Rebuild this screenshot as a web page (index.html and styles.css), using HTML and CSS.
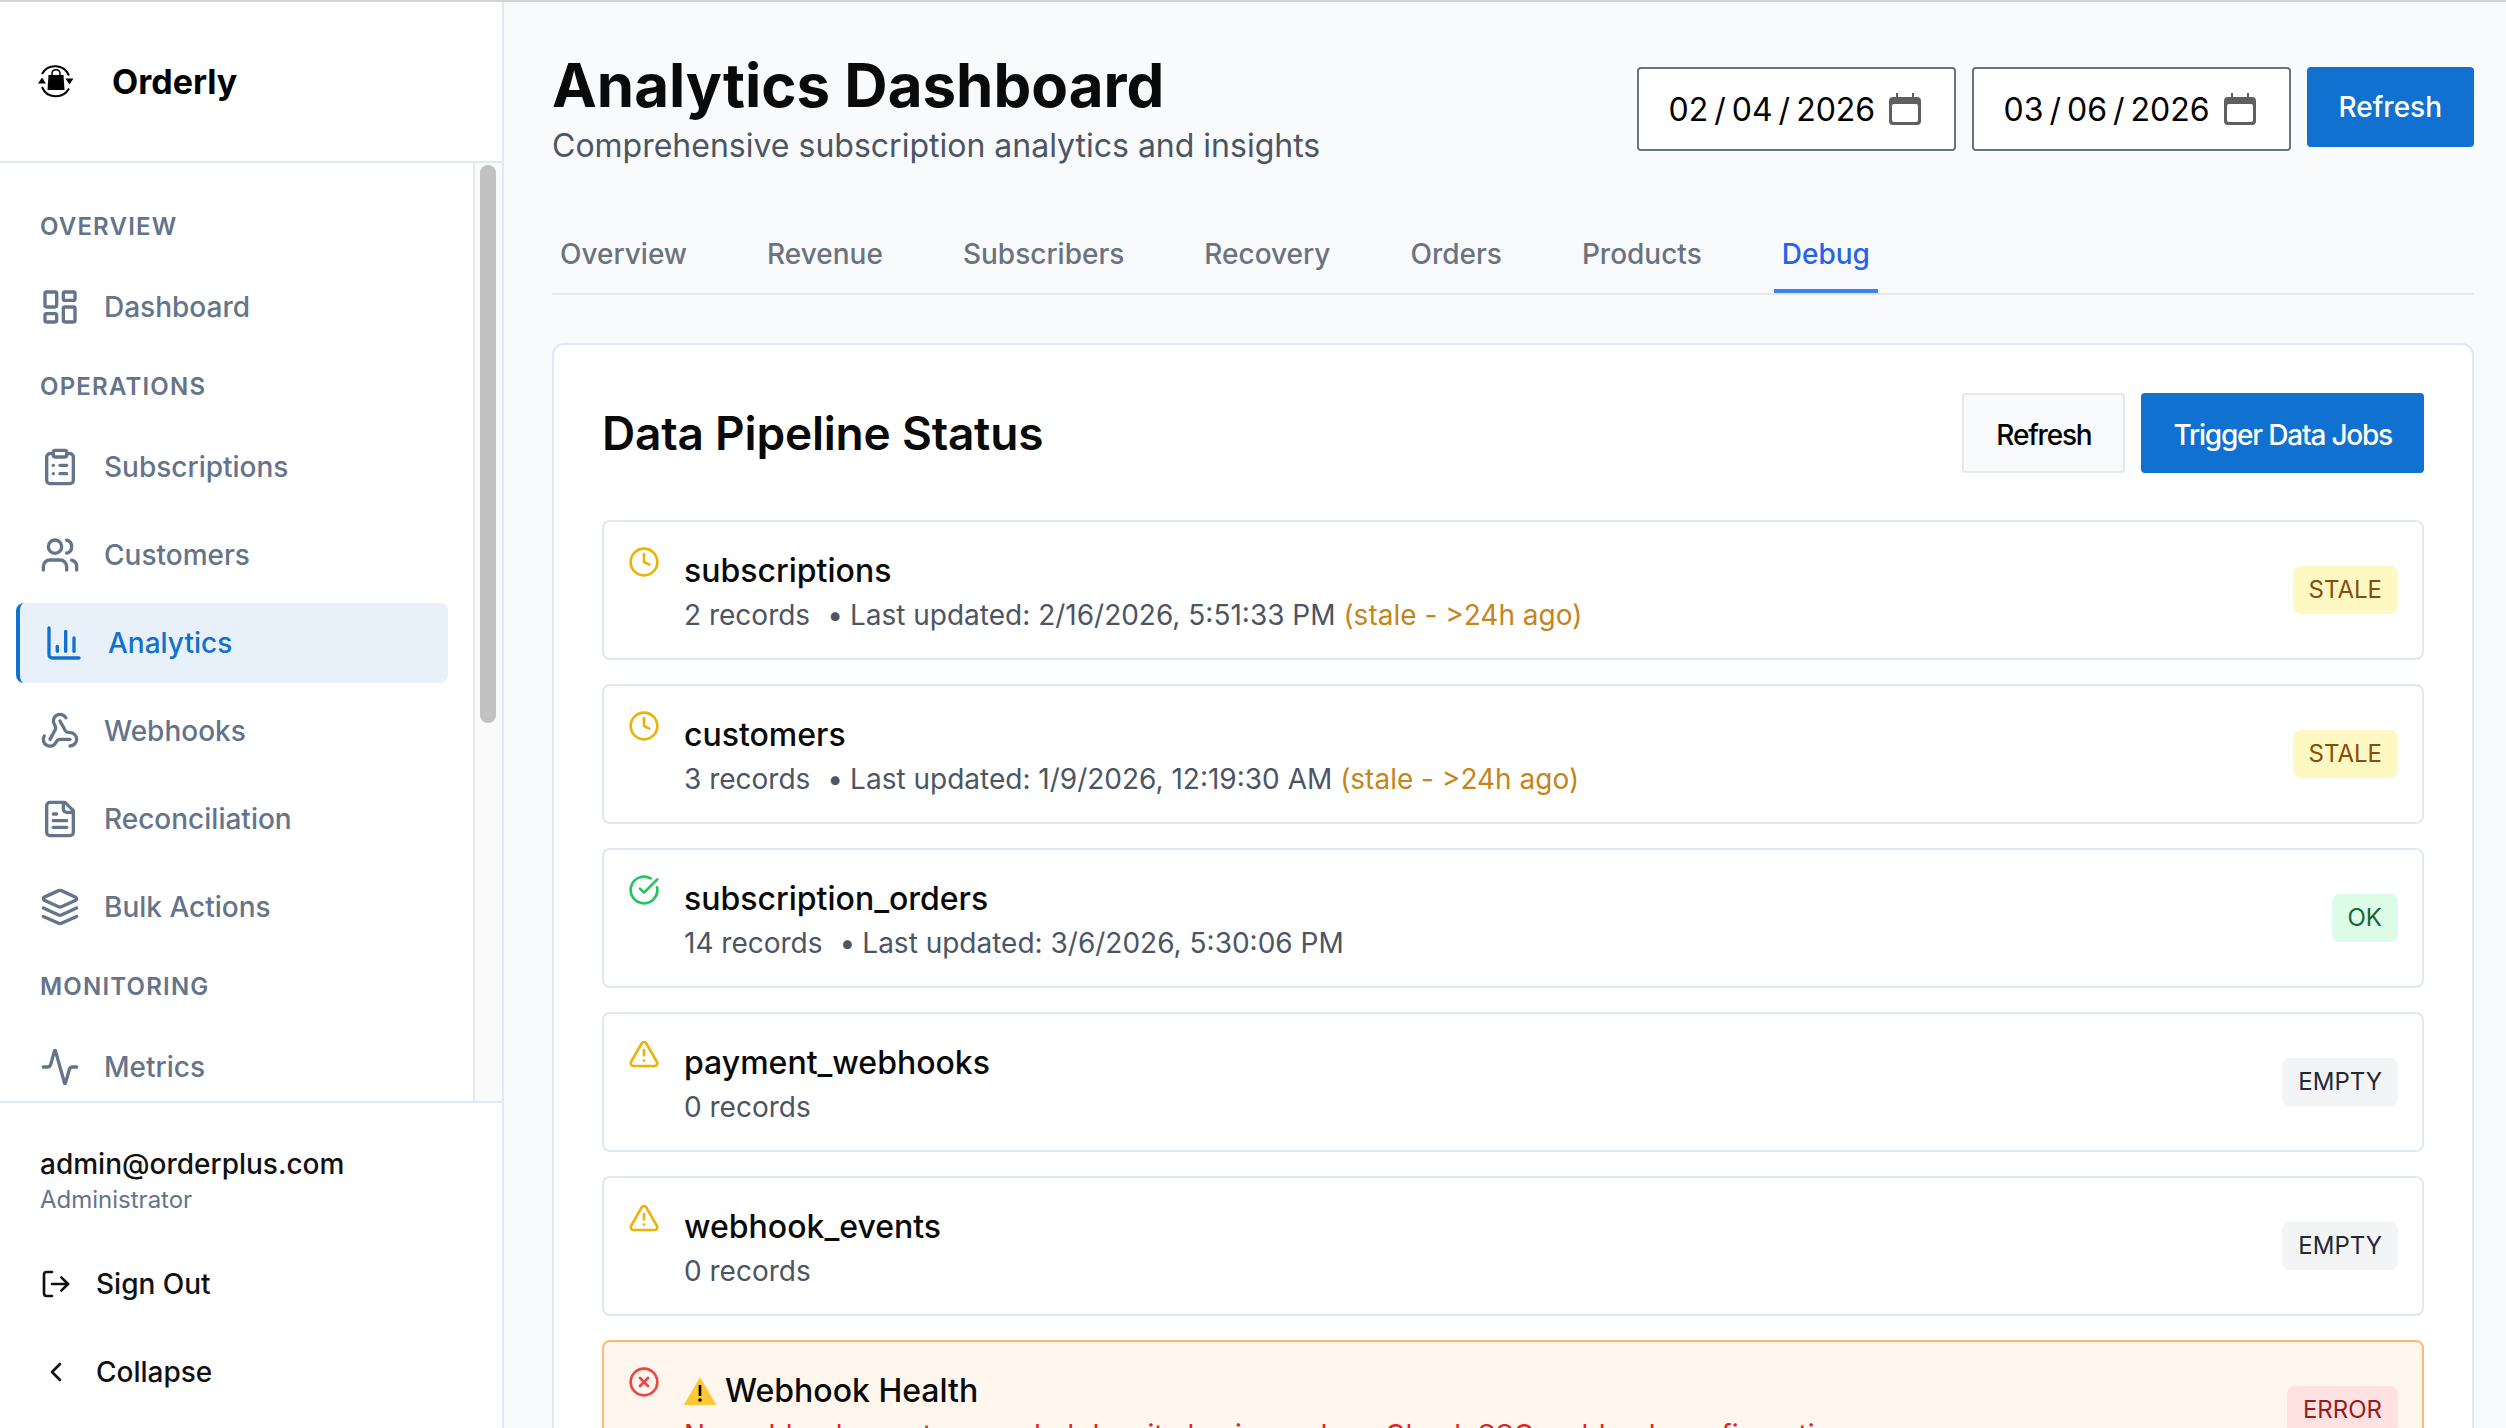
FILE: index.html
```html
<!DOCTYPE html>
<html>
	<head>
		<meta charset="UTF-8">
		<title>Analytics Dashboard</title>
		<link rel="stylesheet" href="styles.css">
	</head>
	<body>
	<div class="sidebar">
		<div class="brand">
			<svg class="logo" viewBox="0 0 40 36" fill="none" stroke="#000">
				<path d="M6 10A15 15 0 0 1 33 11.500" stroke-width="2"/>
				<path d="M29.500 14.500h8l-4 6z" fill="#000" stroke="none"/>
				<path d="M33 24.500A15 15 0 0 1 6 23" stroke-width="2"/>
				<path d="M2 19.500h8l-4-6z" fill="#000" stroke="none"/>
				<path d="M12.500 11h15l1 15h-17z" fill="#000" stroke="none"/>
				<path d="M16 12V9.500c0-5 8-5 8 0V12" stroke-width="1.500"/>
			</svg>
			<span class="brand_name">Orderly</span>
		</div>
		<div class="nav">
			<div class="nav_label">OVERVIEW</div>
			<a class="nav_item" href="#">
				<svg viewBox="0 0 24 24"><rect x="3" y="3" width="7" height="9" rx="1"/><rect x="14" y="3" width="7" height="5" rx="1"/><rect x="14" y="12" width="7" height="9" rx="1"/><rect x="3" y="16" width="7" height="5" rx="1"/></svg>
				Dashboard
			</a>
			<div class="nav_label">OPERATIONS</div>
			<a class="nav_item" href="#">
				<svg viewBox="0 0 24 24"><rect x="8" y="2" width="8" height="4" rx="1"/><path d="M16 4h2a2 2 0 0 1 2 2v14a2 2 0 0 1-2 2H6a2 2 0 0 1-2-2V6a2 2 0 0 1 2-2h2"/><path d="M12 11h4"/><path d="M12 16h4"/><path d="M8 11h.01"/><path d="M8 16h.01"/></svg>
				Subscriptions
			</a>
			<a class="nav_item" href="#">
				<svg viewBox="0 0 24 24"><path d="M16 21v-2a4 4 0 0 0-4-4H6a4 4 0 0 0-4 4v2"/><circle cx="9" cy="7" r="4"/><path d="M22 21v-2a4 4 0 0 0-3-3.870"/><path d="M16 3.130a4 4 0 0 1 0 7.750"/></svg>
				Customers
			</a>
			<a class="nav_item active" href="#">
				<svg viewBox="0 0 24 24"><path d="M3 3v16a2 2 0 0 0 2 2h16"/><path d="M18 17V9"/><path d="M13 17V5"/><path d="M8 17v-3"/></svg>
				Analytics
			</a>
			<a class="nav_item" href="#">
				<svg viewBox="0 0 24 24"><path d="M18 16.980h-5.990c-1.100 0-1.950.940-2.480 1.900A4 4 0 0 1 2 17c.010-.700.200-1.400.570-2"/><path d="m6 17 3.130-5.780c.530-.970.100-2.180-.500-3.100a4 4 0 1 1 6.890-4.060"/><path d="m12 6 3.130 5.730C15.660 12.700 16.900 13 18 13a4 4 0 0 1 0 8"/></svg>
				Webhooks
			</a>
			<a class="nav_item" href="#">
				<svg viewBox="0 0 24 24"><path d="M15 2H6a2 2 0 0 0-2 2v16a2 2 0 0 0 2 2h12a2 2 0 0 0 2-2V7Z"/><path d="M14 2v4a2 2 0 0 0 2 2h4"/><path d="M10 9H8"/><path d="M16 13H8"/><path d="M16 17H8"/></svg>
				Reconciliation
			</a>
			<a class="nav_item" href="#">
				<svg viewBox="0 0 24 24"><path d="M12.830 2.180a2 2 0 0 0-1.660 0L2.600 6.080a1 1 0 0 0 0 1.830l8.580 3.910a2 2 0 0 0 1.660 0l8.580-3.900a1 1 0 0 0 0-1.830Z"/><path d="m22 17.650-9.170 4.160a2 2 0 0 1-1.660 0L2 17.650"/><path d="m22 12.650-9.170 4.160a2 2 0 0 1-1.660 0L2 12.650"/></svg>
				Bulk Actions
			</a>
			<div class="nav_label">MONITORING</div>
			<a class="nav_item" href="#">
				<svg viewBox="0 0 24 24"><path d="M22 12h-2.480a2 2 0 0 0-1.930 1.460l-2.350 8.360a.250.250 0 0 1-.480 0L9.240 2.180a.250.250 0 0 0-.480 0l-2.350 8.360A2 2 0 0 1 4.490 12H2"/></svg>
				Metrics
			</a>
			<div class="nav_track"><div class="nav_thumb"></div></div>
		</div>
		<div class="side_foot">
			<div class="user">
				<div class="user_mail">admin@orderplus.com</div>
				<div class="user_role">Administrator</div>
			</div>
			<a class="foot_item" href="#">
				<svg viewBox="0 0 24 24"><path d="M9 21H5a2 2 0 0 1-2-2V5a2 2 0 0 1 2-2h4"/><polyline points="16 17 21 12 16 7"/><line x1="21" y1="12" x2="9" y2="12"/></svg>
				Sign Out
			</a>
			<a class="foot_item" href="#">
				<svg viewBox="0 0 24 24"><path d="m15 18-6-6 6-6"/></svg>
				Collapse
			</a>
		</div>
	</div>
	<div class="main">
		<div class="top">
			<div>
				<h1>Analytics Dashboard</h1>
				<p class="subtitle">Comprehensive subscription analytics and insights</p>
			</div>
			<div class="top_tools">
				<input class="date" type="date" value="2026-02-04">
				<input class="date" type="date" value="2026-03-06">
				<button class="btn primary">Refresh</button>
			</div>
		</div>
		<div class="tabs">
			<a href="#">Overview</a>
			<a href="#">Revenue</a>
			<a href="#">Subscribers</a>
			<a href="#">Recovery</a>
			<a href="#">Orders</a>
			<a href="#">Products</a>
			<a class="current" href="#">Debug</a>
		</div>
		<div class="card">
			<div class="card_head">
				<h2>Data Pipeline Status</h2>
				<div class="card_tools">
					<button class="btn plain">Refresh</button>
					<button class="btn primary">Trigger Data Jobs</button>
				</div>
			</div>
			<div class="rows">
				<div class="row">
					<svg class="status amber" viewBox="0 0 24 24"><circle cx="12" cy="12" r="10"/><polyline points="12 6 12 12 16 14"/></svg>
					<div class="row_text">
						<div class="row_name">subscriptions</div>
						<div class="row_info"><span>2 records</span><span class="dot">•</span><span>Last updated: 2/16/2026, 5:51:33 PM</span> <span class="stale">(stale - &gt;24h ago)</span></div>
					</div>
					<span class="badge b_stale">STALE</span>
				</div>
				<div class="row">
					<svg class="status amber" viewBox="0 0 24 24"><circle cx="12" cy="12" r="10"/><polyline points="12 6 12 12 16 14"/></svg>
					<div class="row_text">
						<div class="row_name">customers</div>
						<div class="row_info"><span>3 records</span><span class="dot">•</span><span>Last updated: 1/9/2026, 12:19:30 AM</span> <span class="stale">(stale - &gt;24h ago)</span></div>
					</div>
					<span class="badge b_stale">STALE</span>
				</div>
				<div class="row">
					<svg class="status green" viewBox="0 0 24 24"><path d="M21.801 10A10 10 0 1 1 17 3.335"/><path d="m9 11 3 3L22 4"/></svg>
					<div class="row_text">
						<div class="row_name">subscription_orders</div>
						<div class="row_info"><span>14 records</span><span class="dot">•</span><span>Last updated: 3/6/2026, 5:30:06 PM</span></div>
					</div>
					<span class="badge b_ok">OK</span>
				</div>
				<div class="row">
					<svg class="status amber" viewBox="0 0 24 24"><path d="m21.730 18-8-14a2 2 0 0 0-3.480 0l-8 14A2 2 0 0 0 4 21h16a2 2 0 0 0 1.730-3"/><path d="M12 9v4"/><path d="M12 17h.01"/></svg>
					<div class="row_text">
						<div class="row_name">payment_webhooks</div>
						<div class="row_info"><span>0 records</span></div>
					</div>
					<span class="badge b_empty">EMPTY</span>
				</div>
				<div class="row">
					<svg class="status amber" viewBox="0 0 24 24"><path d="m21.730 18-8-14a2 2 0 0 0-3.480 0l-8 14A2 2 0 0 0 4 21h16a2 2 0 0 0 1.730-3"/><path d="M12 9v4"/><path d="M12 17h.01"/></svg>
					<div class="row_text">
						<div class="row_name">webhook_events</div>
						<div class="row_info"><span>0 records</span></div>
					</div>
					<span class="badge b_empty">EMPTY</span>
				</div>
				<div class="row alert">
					<svg class="status red" viewBox="0 0 24 24"><circle cx="12" cy="12" r="10"/><path d="m15 9-6 6"/><path d="m9 9 6 6"/></svg>
					<div class="row_text">
						<div class="row_name">
							<svg class="warn" viewBox="0 0 32 28"><path d="M16 1 31.500 27.500H.5z" fill="#fcc934" stroke="#fcc934" stroke-linejoin="round"/><path d="M16 8v11" stroke="#000" stroke-width="2.600"/><circle cx="16" cy="23" r="1.800" fill="#000"/></svg>
							Webhook Health
						</div>
						<div class="row_info error_text">No webhook events recorded despite having orders. Check SSO webhook configuration</div>
					</div>
					<span class="badge b_error">ERROR</span>
				</div>
			</div>
		</div>
	</div>
	</body>
</html>
```

FILE: styles.css
```css
*{
	padding: 0px;
	margin: 0px;
	box-sizing: border-box;
}
html,body{
	height: 100%;
	overflow: hidden;
}
body{
	display: flex;
	border-top: 2px solid #d1d5db;
	background: #f9fafb;
	font-family: Inter, "Liberation Sans", sans-serif;
	font-size: 28px;
	color: #111;
}
a{
	text-decoration: none;
	color: inherit;
}

/* sidebar */
.sidebar{
	width: 504px;
	flex: none;
	height: 100%;
	display: flex;
	flex-direction: column;
	background: #fff;
	border-right: 2px solid #e2e8f0;
}
.brand{
	height: 161px;
	flex: none;
	display: flex;
	align-items: center;
	padding-left: 36px;
	gap: 36px;
	border-bottom: 2px solid #e2e8f0;
}
.logo{
	width: 40px;
	height: 36px;
}
.brand_name{
	font-size: 34px;
	font-weight: 700;
	color: #000;
}
.nav{
	position: relative;
	flex: 1;
	min-height: 0;
	overflow: hidden;
	padding: 32px 54px 0 16px;
}
/* fake scrollbar, lies over the nav */
.nav_track{
	position: absolute;
	top: 0;
	right: 0;
	bottom: 0;
	width: 29px;
	padding: 2px 6px 0 5px;
	background: #fafafa;
	border-left: 2px solid #e8e8e8;
}
.nav_thumb{
	height: 558px;
	background: #c1c1c1;
	border-radius: 8px;
}
.nav_label{
	height: 64px;
	margin-bottom: 8px;
	padding-left: 24px;
	line-height: 64px;
	font-size: 24px;
	font-weight: 600;
	letter-spacing: 0.05em;
	color: #64748b;
}
.nav_item{
	height: 80px;
	margin-bottom: 8px;
	padding-left: 24px;
	display: flex;
	align-items: center;
	gap: 24px;
	font-size: 28px;
	font-weight: 500;
	color: #64748b;
	border-radius: 8px;
}
.nav_item svg,.foot_item svg,.status{
	fill: none;
	stroke: currentColor;
	stroke-width: 2;
	stroke-linecap: round;
	stroke-linejoin: round;
	flex: none;
}
.nav_item svg{
	width: 40px;
	height: 40px;
}
.nav_item.active{
	border-left: 4px solid #1171d0;
	background: #e8f0fa;
	color: #1171d0;
}
.side_foot{
	flex: none;
	padding: 0 16px 16px;
	border-top: 2px solid #e2e8f0;
}
.user{
	padding: 43px 0 28px 24px;
}
.user_mail{
	line-height: 36px;
	margin-bottom: 2px;
	font-weight: 500;
}
.user_role{
	line-height: 32px;
	font-size: 24px;
	color: #64748b;
}
.foot_item{
	height: 80px;
	margin-bottom: 8px;
	padding-left: 24px;
	display: flex;
	align-items: center;
	gap: 24px;
	font-weight: 500;
}
.foot_item:last-child{
	margin-bottom: 0;
}
.foot_item svg{
	width: 32px;
	height: 32px;
}

/* main */
.main{
	flex: 1;
	min-width: 0;
	padding: 45px 32px 0 48px;
	overflow: hidden;
}
.top{
	display: flex;
	justify-content: space-between;
	align-items: flex-start;
	margin-bottom: 50px;
}
h1{
	font-size: 60px;
	line-height: 77px;
	font-weight: 700;
	color: #0a0a0a;
}
.subtitle{
	font-size: 32px;
	line-height: 44px;
	color: #4b5563;
}
.top_tools{
	display: flex;
	align-items: flex-start;
	gap: 16px;
	margin-top: 20px;
}
.date{
	width: 319px;
	height: 84px;
	padding: 0 33px 0 29px;
	border: 2px solid #6b7280;
	border-radius: 4px;
	background: #fff;
	font-family: inherit;
	font-size: 32px;
	color: #000;
}
.date::-webkit-datetime-edit-text{
	padding: 0 5px;
}
.date::-webkit-calendar-picker-indicator{
	width: 32px;
	height: 32px;
	padding: 0;
	margin: 0;
	background: url("data:image/svg+xml,%3Csvg xmlns='http://www.w3.org/2000/svg' viewBox='0 0 32 32'%3E%3Cpath d='M7 0h2v4h14V0h2v4h3a4 4 0 0 1 4 4v20a4 4 0 0 1-4 4H4a4 4 0 0 1-4-4V8a4 4 0 0 1 4-4h3z' fill='%235f5f5f'/%3E%3Crect x='3' y='11' width='26' height='18' rx='2' fill='%23fff'/%3E%3C/svg%3E") no-repeat center / 32px 32px;
}
.btn{
	height: 80px;
	padding: 0 32px;
	border: none;
	border-radius: 4px;
	font-family: inherit;
	font-size: 28px;
	font-weight: 500;
	cursor: pointer;
}
.primary{
	background: #1171d0;
	color: #fff;
}
.plain{
	background: #f9fafb;
	border: 2px solid #e5e7eb;
	color: #000;
}
.tabs{
	display: flex;
	gap: 64px;
	border-bottom: 2px solid #e2e8f0;
}
.tabs a{
	padding: 16px 8px 15px;
	line-height: 40px;
	font-weight: 500;
	color: #6b7280;
	border-bottom: 4px solid transparent;
}
.tabs a.current{
	color: #2563eb;
	border-bottom-color: #3b82f6;
}
.card{
	margin-top: 48px;
	padding: 48px;
	background: #fff;
	border: 2px solid #e2e8f0;
	border-radius: 12px;
}
.card_head{
	display: flex;
	justify-content: space-between;
	align-items: center;
	margin-bottom: 47px;
}
h2{
	font-size: 46px;
	font-weight: 600;
	letter-spacing: -0.2px;
	color: #0a0a0a;
}
.card_tools{
	display: flex;
	gap: 16px;
}
.card_tools .btn{
	padding-top: 3px;
	letter-spacing: -1.200px;
}
.rows{
	display: flex;
	flex-direction: column;
	gap: 24px;
}
.row{
	display: flex;
	align-items: flex-start;
	gap: 24px;
	height: 140px;
	padding: 24px;
	border: 2px solid #e2e8f0;
	border-radius: 8px;
	background: #fff;
}
.status{
	width: 32px;
	height: 32px;
}
.amber{ color: #eab308; }
.green{ color: #22c55e; }
.red{ color: #ef4444; }
.row_text{
	flex: 1;
}
.row_name{
	display: flex;
	align-items: center;
	gap: 9px;
	height: 49px;
	font-size: 32px;
	font-weight: 500;
	color: #0a0a0a;
}
.row_info{
	line-height: 40px;
	color: #4b5563;
}
.dot{
	margin: 0 7px 0 17px;
}
.stale{
	color: #c4851c;
}
.badge{
	align-self: center;
	height: 48px;
	line-height: 48px;
	padding: 0 16px;
	border-radius: 8px;
	font-size: 24px;
	font-weight: 400;
}
.b_stale{ background: #fef9c3; color: #854d0e; }
.b_ok{ background: #dcfce7; color: #166534; }
.b_empty{ background: #f3f4f6; color: #1f2937; }
.b_error{ background: #fee2e2; color: #991b1b; }
.alert{
	background: #fff7ed;
	border-color: #fdba74;
}
.warn{
	width: 32px;
	height: 28px;
}
.error_text{
	color: #dc2626;
}
```
